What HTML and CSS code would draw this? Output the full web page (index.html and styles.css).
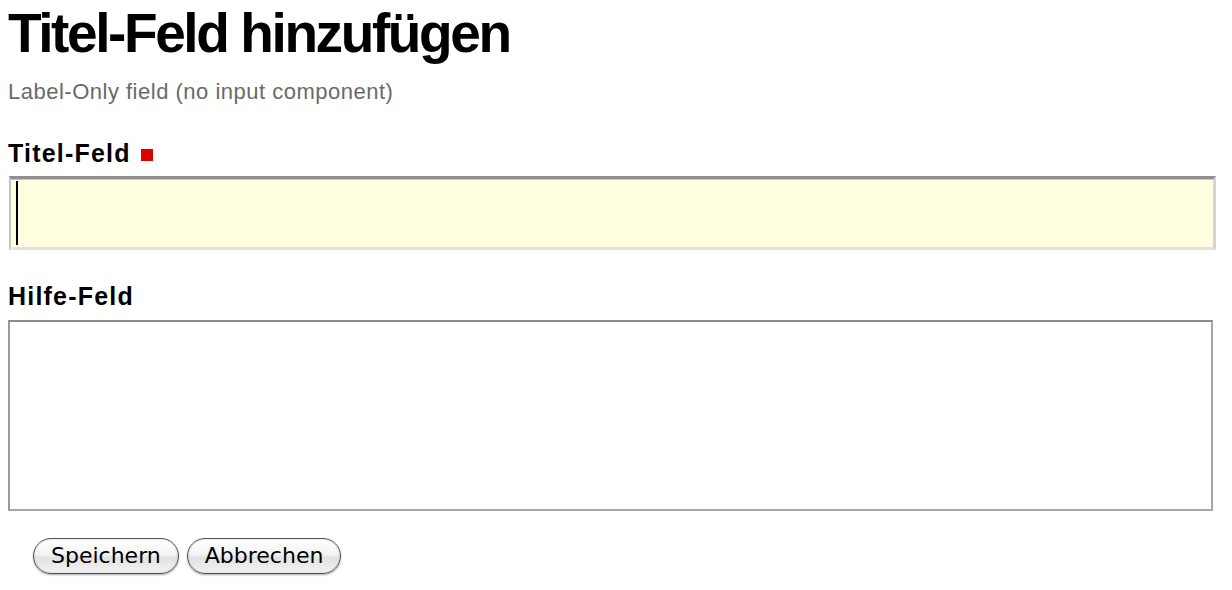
FILE: index.html
```html
<!DOCTYPE html>
<html lang="de">
<head>
<meta charset="utf-8">
<link rel="stylesheet" href="styles.css">
</head>
<body>
<div class="page">
  <h1 class="title">Titel-Feld hinzufügen</h1>
  <p class="subtitle">Label-Only field (no input component)</p>
  <div class="field field-first">
    <label class="label">Titel-Feld <span class="req"></span></label>
    <div class="input"><span class="caret"></span></div>
  </div>
  <div class="field field-second">
    <label class="label">Hilfe-Feld</label>
    <div class="textarea"></div>
  </div>
  <div class="buttons">
    <button class="btn">Speichern</button>
    <button class="btn">Abbrechen</button>
  </div>
</div>
</body>
</html>
```
FILE: styles.css
```css
html, body {
  margin: 0;
  padding: 0;
  background: #fff;
}
body {
  padding: 8px;
  font-family: "Liberation Sans", Arial, sans-serif;
}
.page {
  display: flex;
  flex-direction: column;
}
.title {
  margin: 0;
  font-size: 55px;
  line-height: 50px;
  font-weight: bold;
  letter-spacing: -2.4px;
  color: #000;
}
.subtitle {
  margin: 24px 0 0;
  font-size: 22px;
  line-height: 20px;
  letter-spacing: 0.5px;
  color: #6a6a6a;
}
.field {
  display: flex;
  flex-direction: column;
}
.field-first { margin-top: 39px; }
.field-second { margin-top: 34px; }
.label {
  font-size: 25px;
  line-height: 24px;
  font-weight: bold;
  letter-spacing: 1.2px;
  color: #000;
  display: flex;
  align-items: center;
}
.req {
  display: inline-block;
  width: 12px;
  height: 12px;
  background: #dd0000;
  margin-left: 10px;
  margin-top: 4px;
}
.input {
  box-sizing: border-box;
  margin-top: 11px;
  margin-left: 1px;
  width: 1207px;
  height: 74px;
  background: #ffffe0;
  border-top: 3px solid #8e8e8e;
  border-left: 2px solid #c4c4c4;
  border-right: 3px solid #d4d4d4;
  border-bottom: 3px solid #e2e2e2;
  box-shadow: inset 0 1px 0 #c8c8c8;
  display: flex;
  padding: 2px 0 2px 5px;
}
.caret {
  width: 2px;
  background: #000;
  height: 100%;
}
.textarea {
  box-sizing: border-box;
  margin-top: 12px;
  width: 1205px;
  height: 191px;
  border: 2px solid #999;
  border-top-color: #8a8a8a;
  border-right-color: #a8a8a8;
  border-bottom-color: #a8a8a8;
  background: #fff;
}
.buttons {
  display: flex;
  gap: 8px;
  margin-top: 27px;
  padding-left: 25px;
}
.btn {
  font-family: "DejaVu Sans", "Lucida Grande", sans-serif;
  font-size: 22px;
  height: 36px;
  padding: 0 17px 2px;
  border-radius: 18px;
  border: 1px solid #555;
  color: #000;
  background: linear-gradient(#ffffff 0%, #f4f4f4 45%, #e2e2e2 55%, #f2f2f2 100%);
  box-shadow: 0 1px 2px rgba(0,0,0,0.35), inset 0 0 2px rgba(0,0,0,0.25);
}
```
